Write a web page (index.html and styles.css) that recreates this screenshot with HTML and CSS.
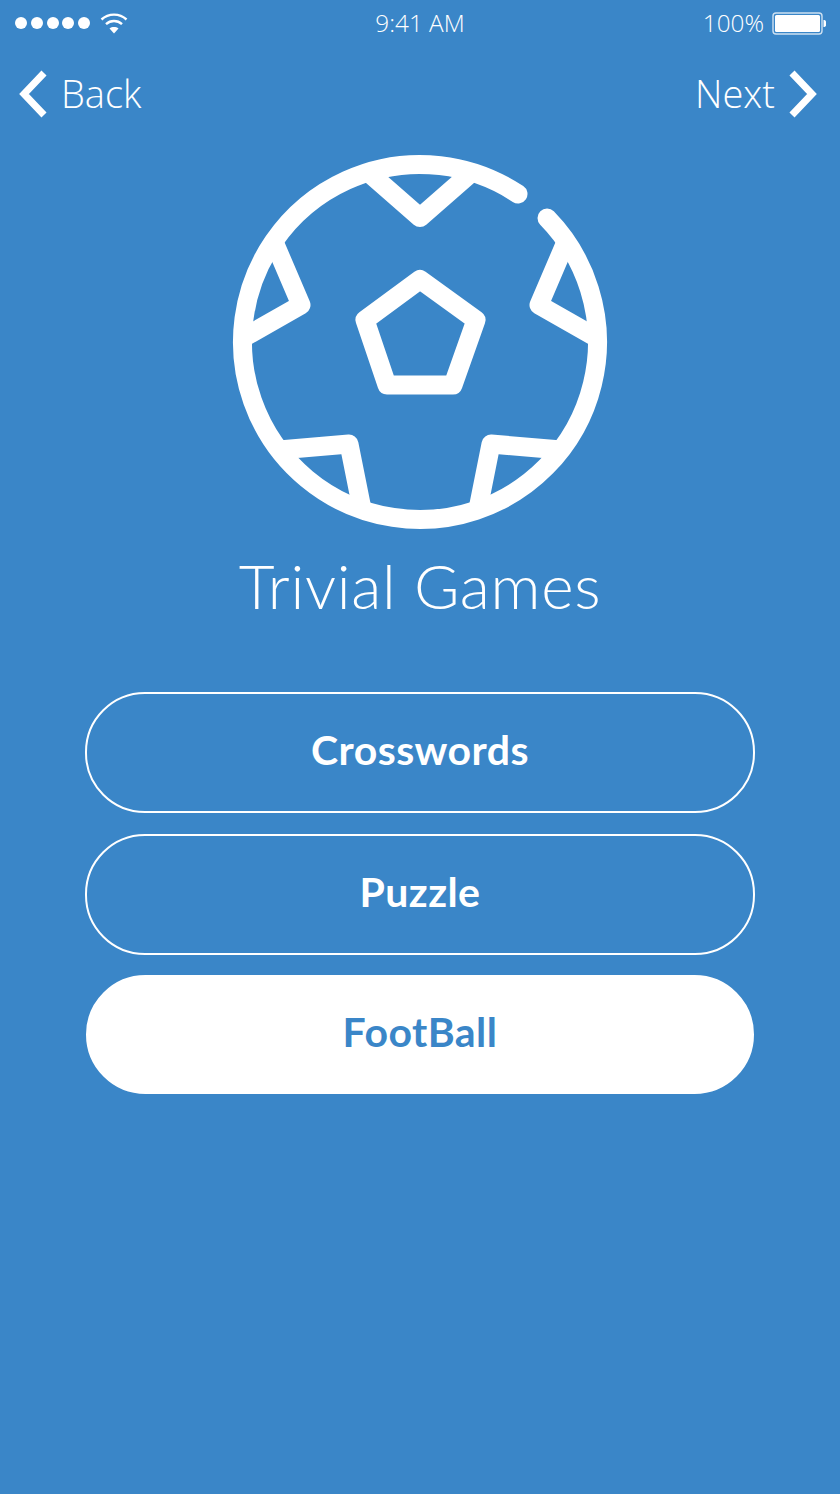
FILE: index.html
```html
<!DOCTYPE html>
<html lang="en">
<head>
<meta charset="utf-8">
<title>Trivial Games</title>
<link rel="stylesheet" href="styles.css">
</head>
<body>
<main class="screen">
  <header class="status">
    <div class="status-left">
      <span class="dots"><i></i><i></i><i></i><i></i><i></i></span>
      <svg class="wifi" width="28" height="22" viewBox="0 0 28 22" aria-hidden="true">
        <path d="M1.500 7.500C8.500 1 19.500 1 26.500 7.500" fill="none" stroke="#fff" stroke-width="2.400"/>
        <path d="M6 12.200C10.500 8 17.500 8 22 12.200" fill="none" stroke="#fff" stroke-width="2.400"/>
        <path d="M9.500 16.500C12 14.600 16 14.600 18.500 16.500L14 21.500Z" fill="#fff"/>
      </svg>
    </div>
    <div class="clock">9:41 AM</div>
    <div class="status-right">
      <span class="pct">100%</span>
      <svg class="battery" width="54" height="23" viewBox="0 0 54 23" aria-hidden="true">
        <rect x="1" y="1" width="49" height="21" rx="3" fill="none" stroke="#fff" stroke-opacity=".75" stroke-width="1.400"/>
        <rect x="3" y="3" width="45" height="17" rx="1.500" fill="#fff"/>
        <path d="M51.500 8c2.200 0 3 1.500 3 3.500s-.8 3.500-3 3.500Z" fill="#fff"/>
      </svg>
    </div>
  </header>

  <nav class="nav">
    <a class="nav-link">
      <svg class="chevron" width="30" height="48" viewBox="0 0 30 48" aria-hidden="true"><path d="M26 3 6 24l20 21" fill="none" stroke="#fff" stroke-width="7"/></svg>
      <span>Back</span>
    </a>
    <a class="nav-link">
      <span>Next</span>
      <svg class="chevron" width="30" height="48" viewBox="0 0 30 48" aria-hidden="true"><path d="M4 3l20 21L4 45" fill="none" stroke="#fff" stroke-width="7"/></svg>
    </a>
  </nav>

  <svg class="ball" width="380" height="380" viewBox="230 152 380 380" aria-hidden="true">
    <g fill="none" stroke="#fff" stroke-width="19" stroke-linecap="round" stroke-linejoin="round">
      <path d="M518 194A177.500 177.500 0 1 0 547 218"/>
      <path d="M420 279.500 476 320 453 385H387L365 320Z"/>
      <g stroke-linecap="butt">
        <path d="M368 172 420 217.500 472 172"/>
        <path d="M274.500 243 301 305 243 338"/>
        <path d="M565.500 243 539 305 597 338"/>
        <path d="M279 450 349 444 362 509"/>
        <path d="M561 450 491 444 478 509"/>
      </g>
    </g>
  </svg>

  <h1 class="title">Trivial Games</h1>

  <div class="options">
    <button class="option">Crosswords</button>
    <button class="option">Puzzle</button>
    <button class="option option-active">FootBall</button>
  </div>
</main>
</body>
</html>
```

FILE: styles.css
```css
* { box-sizing: border-box; }

html, body {
  margin: 0;
  height: 100%;
  overflow: hidden;
}

body {
  background: #3a86c8;
  color: #fff;
}

.screen {
  width: 840px;
  height: 1494px;
  display: flex;
  flex-direction: column;
  align-items: center;
  background: #3a86c8;
}

.status {
  width: 100%;
  height: 46px;
  padding: 0 15px;
  display: grid;
  grid-template-columns: 1fr auto 1fr;
  align-items: center;
  font: 300 24.300px/46px "Open Sans", sans-serif;
}

.status-left {
  display: flex;
  align-items: center;
  gap: 10px;
}

.dots {
  display: flex;
  gap: 3.750px;
}

.dots i {
  width: 12px;
  height: 12px;
  border-radius: 50%;
  background: #fff;
}

.status-right {
  display: flex;
  align-items: center;
  justify-content: flex-end;
  gap: 8px;
  margin-right: -1px;
}

.nav {
  width: 100%;
  height: 94px;
  margin-bottom: 2px;
  padding: 0 22px 0 18px;
  display: flex;
  justify-content: space-between;
  align-items: center;
}

.nav-link {
  display: flex;
  align-items: center;
  gap: 13px;
  font: 300 38px/48px "Open Sans", sans-serif;
}

.chevron {
  margin-top: 2px;
}

.ball {
  display: block;
  margin-top: 10px;
}

.title {
  margin: 13px 0 0;
  font: 300 62px/80px Lato, sans-serif;
  letter-spacing: .7px;
}

.options {
  margin-top: 67px;
  display: flex;
  flex-direction: column;
  align-items: center;
  gap: 20.500px;
}

.option {
  width: 670px;
  height: 121px;
  border: 2px solid #fff;
  border-radius: 60px;
  background: transparent;
  color: #fff;
  font: 700 41px/1 Lato, sans-serif;
  letter-spacing: .45px;
  padding: 0 0 6px;
}

.option-active {
  width: 668px;
  height: 119px;
  background: #fff;
  color: #3a86c8;
}
```
